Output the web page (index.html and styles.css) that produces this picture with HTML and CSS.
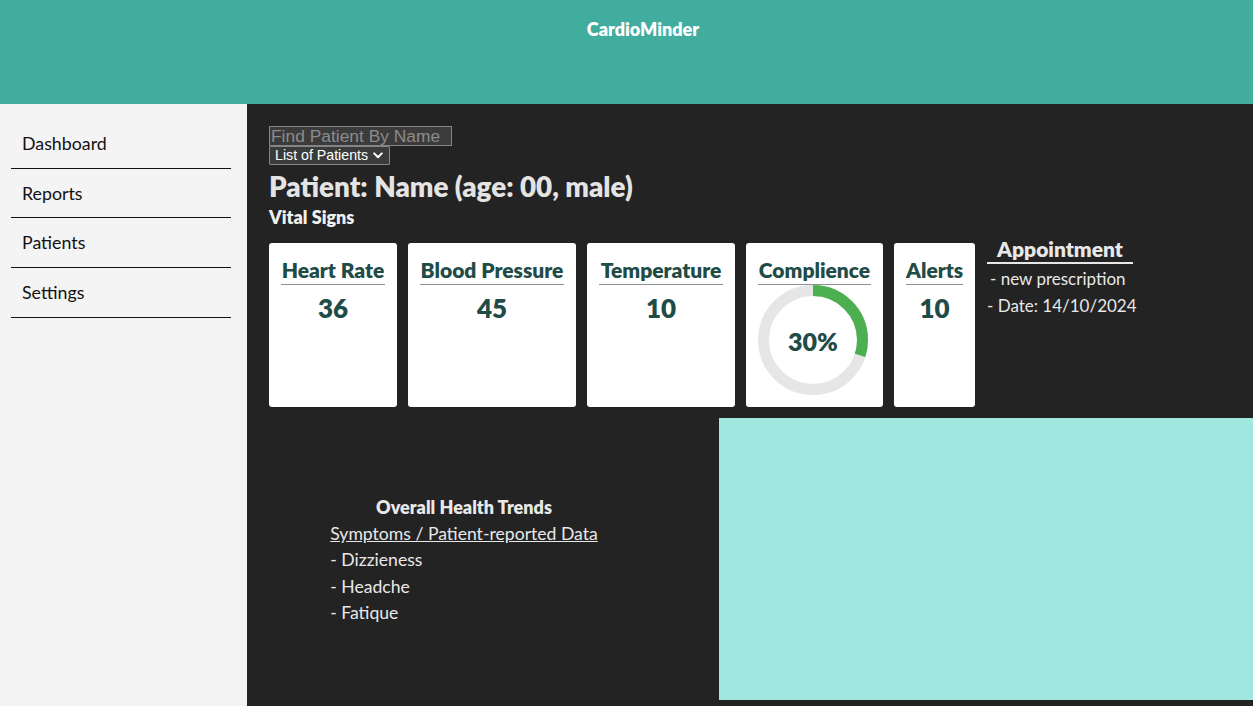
FILE: index.html
```html
<!DOCTYPE html>
<html lang="en">
<head>
<meta charset="utf-8">
<title>CardioMinder</title>
<link rel="stylesheet" href="styles.css">
</head>
<body>
<div class="app">
  <header class="topbar">
    <h1 class="brand">CardioMinder</h1>
  </header>
  <nav class="sidebar">
    <ul class="nav">
      <li class="nav-item">Dashboard</li>
      <li class="nav-item">Reports</li>
      <li class="nav-item">Patients</li>
      <li class="nav-item">Settings</li>
    </ul>
  </nav>
  <main class="main">
    <div class="controls">
      <input class="search" type="text" placeholder="Find Patient By Name">
      <span class="select-wrap">
        <select class="patients">
          <option>List of Patients</option>
        </select>
        <svg class="chevron" width="10" height="7" viewBox="0 0 10 7" aria-hidden="true">
          <path d="M1.2 1.4 L5 5.2 L8.8 1.4" fill="none" stroke="#ffffff" stroke-width="2" stroke-linecap="round" stroke-linejoin="round"/>
        </svg>
      </span>
    </div>
    <h2 class="patient-title">Patient: Name (age: 00, male)</h2>
    <h3 class="section-title">Vital Signs</h3>
    <div class="vitals">
      <div class="card card-hr">
        <h4 class="card-title">Heart Rate</h4>
        <div class="card-value">36</div>
      </div>
      <div class="card card-bp">
        <h4 class="card-title">Blood Pressure</h4>
        <div class="card-value">45</div>
      </div>
      <div class="card card-temp">
        <h4 class="card-title">Temperature</h4>
        <div class="card-value">10</div>
      </div>
      <div class="card card-comp">
        <h4 class="card-title">Complience</h4>
        <div class="donut">
          <svg class="donut-svg" width="110" height="110" viewBox="0 0 110 110">
            <circle cx="55" cy="55" r="49.5" fill="none" stroke="#e6e6e6" stroke-width="11"/>
            <circle cx="55" cy="55" r="49.5" fill="none" stroke="#4caf50" stroke-width="11" stroke-dasharray="93.3 311" transform="rotate(-90 55 55)"/>
          </svg>
          <span class="donut-label">30%</span>
        </div>
      </div>
      <div class="card card-alerts">
        <h4 class="card-title">Alerts</h4>
        <div class="card-value">10</div>
      </div>
      <div class="appointment">
        <h4 class="appt-title">Appointment</h4>
        <div class="appt-line appt-first">- new prescription</div>
        <div class="appt-line">- Date: 14/10/2024</div>
      </div>
    </div>
    <div class="lower">
      <div class="trends">
        <div class="trends-inner">
          <h4 class="trends-title">Overall Health Trends</h4>
          <a class="trends-link" href="#">Symptoms / Patient-reported Data</a>
          <div class="trend-item">- Dizzieness</div>
          <div class="trend-item">- Headche</div>
          <div class="trend-item">- Fatique</div>
        </div>
      </div>
      <div class="chart-box"></div>
    </div>
  </main>
</div>
</body>
</html>
```

FILE: styles.css
```css
* { box-sizing: border-box; }

html, body {
  margin: 0;
  padding: 0;
  height: 100%;
}

body {
  font-family: Lato, "Open Sans", sans-serif;
  overflow: hidden;
}

.app {
  display: grid;
  grid-template-columns: 247px 1fr;
  grid-template-rows: 104px 1fr;
  height: 100vh;
}

.topbar {
  grid-column: 1 / 3;
  background: #41ad9f;
  display: flex;
  justify-content: center;
  padding-left: 33px;
}

.brand {
  margin: 0;
  padding-top: 17px;
  font-size: 18px;
  line-height: 24px;
  font-weight: 800;
  color: #ffffff;
}

.sidebar {
  background: #f4f4f4;
  padding: 15px 16px 0 11px;
}

.nav {
  list-style: none;
  margin: 0;
  padding: 0;
}

.nav-item {
  padding: 12px 11px;
  line-height: 24.7px;
  font-size: 17.8px;
  color: #111111;
  border-bottom: 1px solid #111111;
}

.main {
  background: #232323;
  padding: 22px 0 0 22px;
  overflow: hidden;
  color: #e4e4e4;
}

.controls {
  display: flex;
  flex-direction: column;
  align-items: flex-start;
}

.search {
  color-scheme: dark;
  width: 183px;
  height: 20px;
  padding: 0 1px;
  font-family: "Liberation Sans", Arial, sans-serif;
  font-size: 17.4px;
  line-height: 18px;
  border: 1px solid #858585;
  background: #3b3b3b;
  color: #ffffff;
}

.search::placeholder {
  color: #8c8c8c;
}

.select-wrap {
  position: relative;
  display: block;
  height: 19px;
}

.patients {
  appearance: none;
  -webkit-appearance: none;
  color-scheme: dark;
  display: block;
  width: 121px;
  height: 19px;
  padding: 0 0 0 5px;
  font-family: "Liberation Sans", Arial, sans-serif;
  font-size: 14.2px;
  line-height: 17px;
  border: 1px solid #858585;
  border-radius: 1px;
  background: #3b3b3b;
  color: #ffffff;
}

.chevron {
  position: absolute;
  left: 104px;
  top: 6px;
  pointer-events: none;
}

.patient-title {
  margin: 6px 0 0;
  font-size: 27.8px;
  line-height: 32px;
  font-weight: 800;
  color: #e4e4e4;
}

.section-title {
  margin: 3px 0 0;
  font-size: 18px;
  line-height: 23px;
  font-weight: 800;
  color: #f0f0f0;
}

.vitals {
  display: flex;
  align-items: stretch;
  gap: 11px;
  margin-top: 14px;
}

.card {
  background: #ffffff;
  border-radius: 3px;
  padding: 12px 12px 12px 12px;
  color: #1f4c47;
  display: flex;
  flex-direction: column;
  align-items: center;
}

.card-hr { width: 128px; }
.card-bp { width: 168px; }
.card-temp { width: 148px; }
.card-comp { width: 137px; }
.card-alerts { width: 81px; }

.card-title {
  margin: 1px 0 0;
  align-self: stretch;
  text-align: center;
  font-size: 21px;
  line-height: 28px;
  font-weight: 800;
  border-bottom: 1px solid #8a9391;
  white-space: nowrap;
}

.card-value {
  margin-top: 7px;
  font-size: 26px;
  line-height: 32px;
  font-weight: 800;
}

.donut {
  display: grid;
  place-items: center;
  width: 110px;
  height: 110px;
  margin-left: -3px;
}

.donut-svg,
.donut-label {
  grid-area: 1 / 1;
}

.donut-svg {
  display: block;
}

.donut-label {
  font-size: 25px;
  font-weight: 800;
  line-height: 30px;
  color: #1f4c47;
  margin-top: 2px;
}

.appointment {
  align-self: flex-start;
  margin-top: -7px;
  margin-left: 1px;
  color: #e8e8e8;
  width: 146px;
}

.appt-title {
  margin: 0;
  text-align: center;
  font-size: 21px;
  line-height: 26px;
  font-weight: 800;
  color: #e8e8e8;
  border-bottom: 2px solid #e8e8e8;
}

.appt-line {
  font-size: 17px;
  line-height: 27px;
  white-space: nowrap;
}

.appt-first {
  margin-top: 1px;
  padding-left: 3px;
}

.lower {
  display: flex;
  margin-top: 11px;
  height: 282px;
}

.trends {
  flex: 0 0 390px;
  margin-right: 60px;
  padding-top: 3px;
  display: flex;
  justify-content: center;
  align-items: center;
}

.trends-inner {
  display: flex;
  flex-direction: column;
  align-items: flex-start;
  color: #e8e8e8;
  font-size: 17.6px;
  line-height: 26.5px;
}

.trends-title {
  margin: 0;
  align-self: stretch;
  text-align: center;
  font-size: 18px;
  line-height: 26.5px;
  font-weight: 800;
}

.trends-link {
  color: #e8e8e8;
  text-decoration: underline;
}

.chart-box {
  flex: 1;
  background: #a0e7df;
}
```
